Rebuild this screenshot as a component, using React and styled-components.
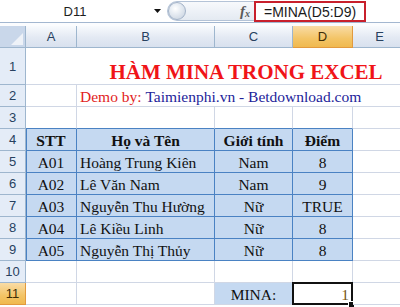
import styled, { createGlobalStyle, css } from 'styled-components';

const GRID = '#d0d7e5';
const BLUE = '#4a82c3';
const FILL = '#c5d9f1';

const GlobalStyle = createGlobalStyle`
  html, body { margin: 0; padding: 0; background: #fff; }
  body { font-family: 'Liberation Sans', Arial, sans-serif; }
`;

const Window = styled.div`
  width: 400px;
  height: 307px;
  overflow: hidden;
  background: #fff;
  display: flex;
  flex-direction: column;
`;

const FormulaBar = styled.div`
  height: 22px;
  flex: none;
  display: flex;
  align-items: stretch;
  border-bottom: 1px solid #a3b7d0;
  background: #fff;
`;

const NameBox = styled.div`
  width: 150px;
  display: flex;
  align-items: center;
  justify-content: center;
  font-size: 13px;
  color: #1e1e1e;
`;

const DropButton = styled.div`
  width: 14px;
  display: flex;
  align-items: center;
  justify-content: center;
`;

const Capsule = styled.div`
  width: 87px;
  height: 20px;
  margin: 1px 0 0 3px;
  box-sizing: border-box;
  display: flex;
  align-items: center;
  justify-content: space-between;
  border: 1px solid #b4c3d7;
  border-right: none;
  border-radius: 10px 0 0 10px;
  background: linear-gradient(#f7f9fc, #e4eaf2);
`;

const Knob = styled.div`
  width: 18px;
  height: 18px;
  box-sizing: border-box;
  border-radius: 50%;
  border: 1px solid #a3b3c8;
  background: radial-gradient(circle at 40% 35%, #ffffff 0, #e9eef4 35%, #c4cfdd 100%);
`;

const Fx = styled.div`
  margin-right: 4px;
  font-family: 'Liberation Serif', 'Times New Roman', serif;
  font-style: italic;
  font-weight: 700;
  font-size: 15px;
  color: #5a5a5a;
  sub {
    font-size: 10px;
    vertical-align: -1px;
  }
`;

const FormulaInput = styled.div`
  width: 112px;
  height: 21px;
  margin-top: 1px;
  box-sizing: border-box;
  border: 2px solid #c8202c;
  display: flex;
  align-items: center;
  padding-left: 8px;
  font-size: 14px;
  color: #1a1a1a;
  white-space: nowrap;
`;

const Strip = styled.div`
  height: 3px;
  flex: none;
  background: #fbfcfe;
`;

const Sheet = styled.div`
  display: grid;
  grid-template-columns: 26px 51px 138px 78px 60px 54px 60px;
  grid-template-rows: 22px 37px repeat(10, 22px);
  width: 467px;
`;

const headerBase = css`
  box-sizing: border-box;
  display: flex;
  align-items: center;
  justify-content: center;
  font-family: 'Liberation Sans', Arial, sans-serif;
  font-size: 13px;
  color: #27415f;
  border-right: 1px solid #9eb6ce;
  border-bottom: 1px solid #9eb6ce;
`;

const activeHeader = css`
  background: linear-gradient(#f9dca6, #f3c466 60%, #f0b94f);
  color: #3d2c06;
  border-right-color: #e29a3e;
  border-bottom-color: #e29a3e;
`;

const Corner = styled.div`
  ${headerBase};
  background: #c9d7ea;
  align-items: flex-end;
  justify-content: flex-end;
  padding: 0 2px 2px 0;
`;

const ColHeader = styled.div`
  ${headerBase};
  background: linear-gradient(#f8fafd, #e3e9f3 55%, #d8e1ee);
  ${(p) => p.$active && activeHeader};
`;

const RowHeader = styled.div`
  ${headerBase};
  background: #e4ecf7;
  ${(p) => p.$active && activeHeader};
`;

const Cell = styled.div`
  box-sizing: border-box;
  grid-column: span ${(p) => p.$span || 1};
  position: relative;
  display: flex;
  align-items: flex-end;
  justify-content: ${(p) =>
    p.$align === 'center' ? 'center' : p.$align === 'right' ? 'flex-end' : 'flex-start'};
  padding: 0 3px 1px;
  background: ${(p) => (p.$fill ? FILL : '#fff')};
  border-right: 1px solid ${(p) => (p.$edge ? BLUE : p.$span > 1 ? 'transparent' : GRID)};
  border-bottom: 1px solid ${(p) => (p.$edge || p.$tableTop ? BLUE : GRID)};
  ${(p) => p.$first && `box-shadow: inset 1px 0 0 ${BLUE};`}
  font-family: 'Liberation Serif', 'Times New Roman', serif;
  font-size: 15.5px;
  line-height: 16px;
  font-weight: ${(p) => (p.$bold ? 700 : 400)};
  color: ${(p) => p.$color || '#111'};
  white-space: nowrap;

  ${(p) =>
    p.$selected &&
    css`
      &::before {
        content: '';
        position: absolute;
        top: -1px;
        left: -1px;
        right: -1px;
        bottom: -1px;
        border: 2px solid #111;
      }
      &::after {
        content: '';
        position: absolute;
        right: -3px;
        bottom: -4px;
        width: 5px;
        height: 5px;
        background: #111;
        border: 1px solid #fff;
      }
    `}
`;

const Title = styled.span`
  font-size: 21px;
  line-height: 21px;
  font-weight: 700;
  color: #f01418;
`;

const Demo = styled.span`
  color: ${(p) => (p.$red ? '#e21d1d' : '#23239a')};
`;

// F is only there so the merged title row reaches past the window edge
const COLS = ['A', 'B', 'C', 'D', 'E', 'F'];

const students = [
  ['A01', 'Hoàng Trung Kiên', 'Nam', '8'],
  ['A02', 'Lê Văn Nam', 'Nam', '9'],
  ['A03', 'Nguyễn Thu Hường', 'Nữ', 'TRUE'],
  ['A04', 'Lê Kiều Linh', 'Nữ', '8'],
  ['A05', 'Nguyễn Thị Thủy', 'Nữ', '8'],
];

const aligns = ['center', 'left', 'center', 'center'];

function TableRow({ row, cells, bold }) {
  return (
    <>
      <RowHeader>{row}</RowHeader>
      {cells.map((text, i) => (
        <Cell
          key={i}
          $fill
          $edge
          $first={i === 0}
          $bold={bold}
          $align={bold ? 'center' : aligns[i]}
        >
          {text}
        </Cell>
      ))}
      <Cell />
      <Cell />
    </>
  );
}

function SelectAllMark() {
  return (
    <svg width="12" height="12" viewBox="0 0 12 12">
      <polygon points="12,0 12,12 0,12" fill="#eef2f8" />
    </svg>
  );
}

export default function App() {
  return (
    <Window>
      <GlobalStyle />
      <FormulaBar>
        <NameBox>D11</NameBox>
        <DropButton>
          <svg width="7" height="4" viewBox="0 0 7 4">
            <polygon points="0,0 7,0 3.5,4" fill="#111" />
          </svg>
        </DropButton>
        <Capsule>
          <Knob />
          <Fx>
            f<sub>x</sub>
          </Fx>
        </Capsule>
        <FormulaInput>=MINA(D5:D9)</FormulaInput>
      </FormulaBar>
      <Strip />

      <Sheet>
        <Corner>
          <SelectAllMark />
        </Corner>
        {COLS.map((c) => (
          <ColHeader key={c} $active={c === 'D'}>
            {c === 'F' ? null : c}
          </ColHeader>
        ))}

        <RowHeader>1</RowHeader>
        <Cell $span={6} $align="center">
          <Title>HÀM MINA TRONG EXCEL</Title>
        </Cell>

        <RowHeader>2</RowHeader>
        <Cell />
        <Cell $span={5}>
          <Demo $red>Demo by:&nbsp;</Demo>
          <Demo>Taimienphi.vn - Betdownload.com</Demo>
        </Cell>

        <RowHeader>3</RowHeader>
        <Cell $tableTop />
        <Cell $tableTop />
        <Cell $tableTop />
        <Cell $tableTop />
        <Cell />
        <Cell />

        <TableRow row={4} bold cells={['STT', 'Họ và Tên', 'Giới tính', 'Điểm']} />
        {students.map((s, i) => (
          <TableRow key={s[0]} row={i + 5} cells={s} />
        ))}

        <RowHeader>10</RowHeader>
        {COLS.map((c) => (
          <Cell key={c} />
        ))}

        <RowHeader $active>11</RowHeader>
        <Cell />
        <Cell />
        <Cell $fill $align="center">
          MINA:
        </Cell>
        <Cell $selected $align="right" $color="#7a5a14">
          1
        </Cell>
        <Cell />
        <Cell />
      </Sheet>
    </Window>
  );
}
